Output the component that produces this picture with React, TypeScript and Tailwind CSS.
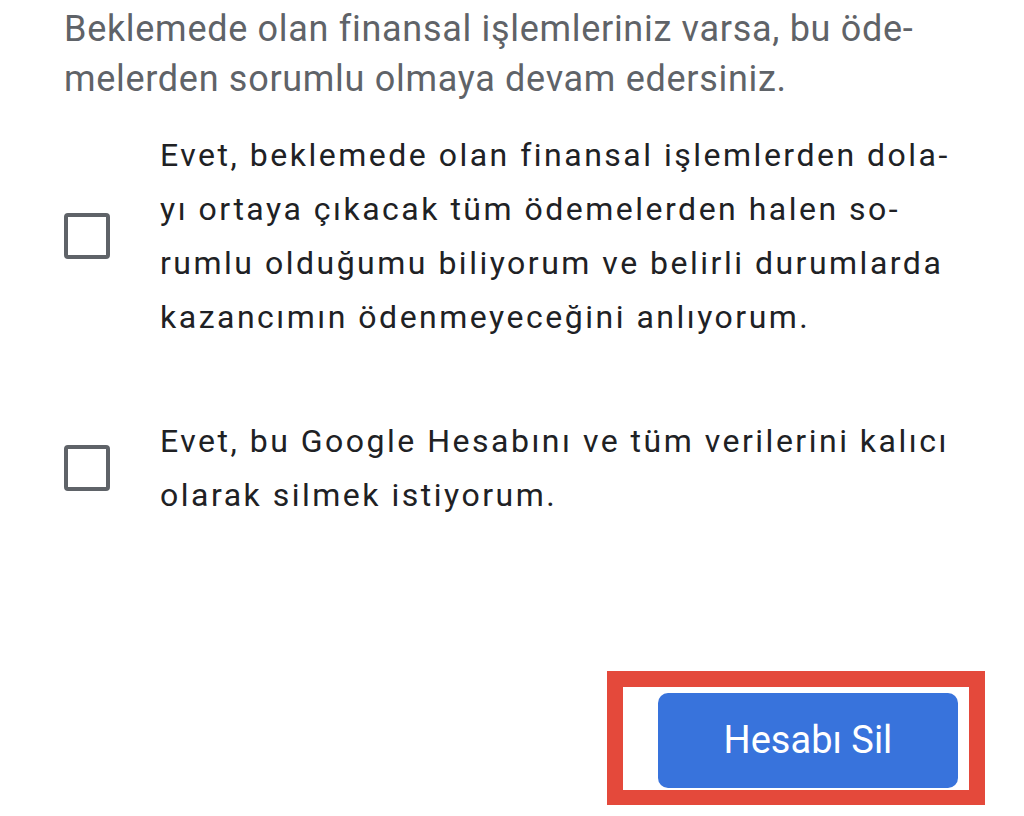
import React from 'react';

const Checkbox: React.FC = () => (
  <div className="w-[46px] h-[46px] shrink-0 rounded-[4px] border-[4px] border-[#5f6368] bg-white" />
);

interface OptionProps {
  lines: string[];
}

const Option: React.FC<OptionProps> = ({ lines }) => (
  <div className="flex items-center">
    <div className="w-[96px] shrink-0 flex">
      <Checkbox />
    </div>
    <div className="text-[32px] leading-[54px] tracking-[2.5px] text-[#202124]">
      {lines.map((l) => (
        <div key={l} className="whitespace-nowrap">{l}</div>
      ))}
    </div>
  </div>
);

export default function App() {
  return (
    <div className="w-[1024px] h-[816px] bg-white overflow-hidden flex flex-col" style={{ fontFamily: 'Roboto, "Noto Sans", sans-serif' }}>
      <div className="pl-[64px] pt-[4px] text-[36px] leading-[50px] tracking-[0.7px] text-[#5f6368]">
        <div className="whitespace-nowrap">Beklemede olan finansal işlemleriniz varsa, bu öde-</div>
        <div className="whitespace-nowrap">melerden sorumlu olmaya devam edersiniz.</div>
      </div>

      <div className="pl-[64px] mt-[24px]">
        <Option
          lines={[
            'Evet, beklemede olan finansal işlemlerden dola-',
            'yı ortaya çıkacak tüm ödemelerden halen so-',
            'rumlu olduğumu biliyorum ve belirli durumlarda',
            'kazancımın ödenmeyeceğini anlıyorum.',
          ]}
        />
      </div>

      <div className="pl-[64px] mt-[70px]">
        <Option
          lines={['Evet, bu Google Hesabını ve tüm verilerini kalıcı', 'olarak silmek istiyorum.']}
        />
      </div>

      <div className="flex justify-end pr-[39px] mt-[149px]">
        <div className="border-[16px] border-b-[15px] border-[#e4493b] pl-[35px] pr-[11px] pt-[6px] pb-[2px]">
          <button className="w-[300px] h-[95px] rounded-[10px] bg-[#3873dc] text-white text-[38px] font-normal flex items-center justify-center">
            Hesabı Sil
          </button>
        </div>
      </div>
    </div>
  );
}
